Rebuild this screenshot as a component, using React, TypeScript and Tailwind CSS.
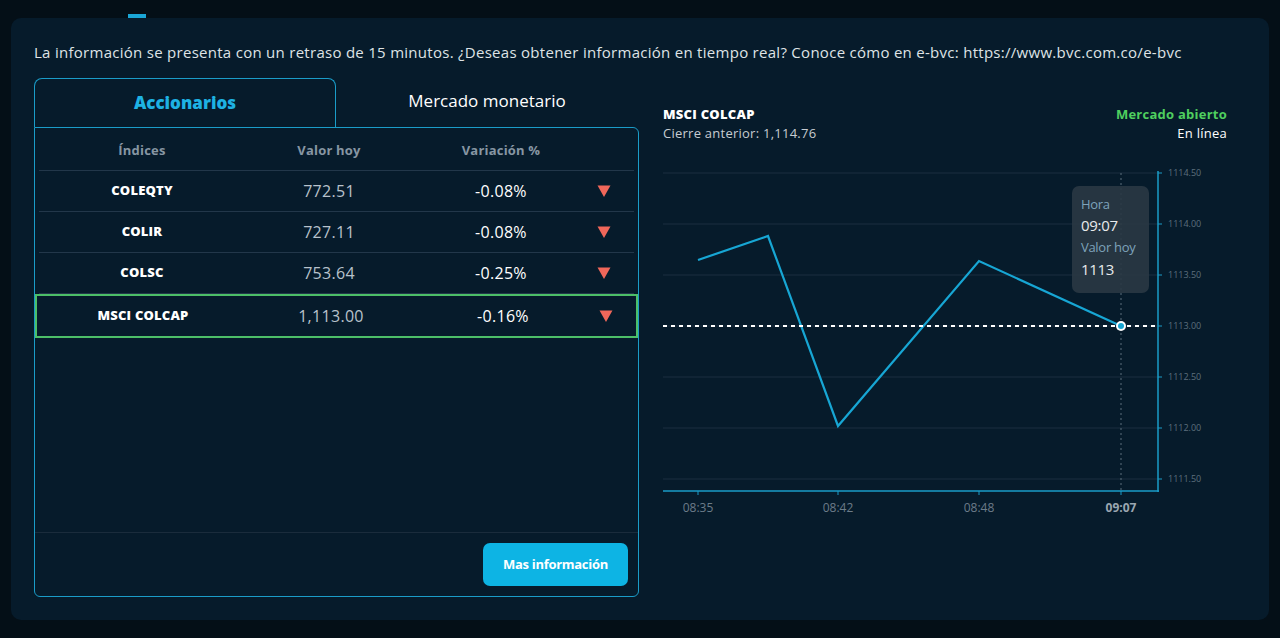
import React from "react";

const rows = [
  { name: "COLEQTY", value: "772.51", change: "-0.08%" },
  { name: "COLIR", value: "727.11", change: "-0.08%" },
  { name: "COLSC", value: "753.64", change: "-0.25%" },
];

// chart coords: svg top sits at page y=164
const yLabels = [
  { y: 8, t: "1114.50" },
  { y: 59, t: "1114.00" },
  { y: 110, t: "1113.50" },
  { y: 161, t: "1113.00" },
  { y: 212, t: "1112.50" },
  { y: 263, t: "1112.00" },
  { y: 314, t: "1111.50" },
];

const xLabels = [
  { x: 35, t: "08:35" },
  { x: 175, t: "08:42" },
  { x: 316, t: "08:48" },
  { x: 458, t: "09:07" },
];

function DownTriangle() {
  return (
    <svg viewBox="0 0 14 14" className="h-[14px] w-[14px]">
      <path d="M0.5 1.5h13L7 13z" fill="#f0675a" />
    </svg>
  );
}

function Row({
  name,
  value,
  change,
  selected,
}: {
  name: string;
  value: string;
  change: string;
  selected?: boolean;
}) {
  return (
    <div
      className={
        selected
          ? "grid h-[44px] grid-cols-[208px_168px_176px_44px] items-center border-2 border-[#4cbf68] px-[2px]"
          : "mx-[4px] grid h-[41px] grid-cols-[206px_168px_176px_44px] items-center border-b border-[#22374a]"
      }
    >
      <div className="text-center text-[13px] font-extrabold tracking-[0.2px] text-white">{name}</div>
      <div className="text-center text-[16px] tracking-[0.3px] text-[#b8c2cb]">{value}</div>
      <div className="text-center text-[16px] tracking-[0.3px] text-white">{change}</div>
      <div className="flex pl-[8px]">
        <DownTriangle />
      </div>
    </div>
  );
}

function Chart() {
  const pts = "35,95 105,71 175,261 316,96 458,161";
  return (
    <div className="relative mt-[22px] h-[358px] w-[564px]">
      <svg width="564" height="358" className="block">
        {yLabels.map((l) => (
          <g key={l.t}>
            <line x1="0" x2="495" y1={l.y} y2={l.y} stroke="#15293a" strokeWidth="1.5" />
            <line x1="495" x2="499" y1={l.y} y2={l.y} stroke="#1a9cc8" strokeWidth="1" />
            <text x="505" y={l.y + 3} fontSize="9" fill="#5d6f7d" fontFamily="'Open Sans', sans-serif">
              {l.t}
            </text>
          </g>
        ))}
        <line x1="458" x2="458" y1="8" y2="326" stroke="#5a6e7d" strokeWidth="1" strokeDasharray="2 3" />
        <line x1="495" x2="495" y1="6" y2="327" stroke="#1a9cc8" strokeWidth="1.5" />
        <line x1="0" x2="496" y1="326" y2="326" stroke="#1a9cc8" strokeWidth="1.5" />
        {xLabels.map((l) => (
          <g key={l.t}>
            <line x1={l.x} x2={l.x} y1="326" y2="330" stroke="#1a9cc8" strokeWidth="1" />
            <text
              x={l.x}
              y="347"
              fontSize="12"
              textAnchor="middle"
              fill={l.t === "09:07" ? "#9aa6b0" : "#6c7c89"}
              fontWeight={l.t === "09:07" ? 700 : 400}
              fontFamily="'Open Sans', sans-serif"
            >
              {l.t}
            </text>
          </g>
        ))}
        <polyline points={pts} fill="none" stroke="#17a6d4" strokeWidth="2.2" />
        <line x1="0" x2="495" y1="161" y2="161" stroke="#ffffff" strokeWidth="2" strokeDasharray="4 4" />
        <circle cx="458" cy="161" r="5" fill="#ffffff" />
        <circle cx="458" cy="161" r="3" fill="#17a6d4" />
      </svg>
      <div className="absolute left-[409px] top-[21px] flex h-[107px] w-[77px] flex-col rounded-[7px] bg-[#2a3844]/90 px-[9px] pt-[9px]">
        <span className="text-[13px] leading-[19px] tracking-[-0.3px] text-[#7ea3bb]">Hora</span>
        <span className="text-[15px] leading-[22px] tracking-[-0.3px] text-[#e8eaec]">09:07</span>
        <span className="text-[13px] leading-[22px] tracking-[-0.3px] text-[#7ea3bb]">Valor hoy</span>
        <span className="text-[15px] leading-[22px] tracking-[-0.3px] text-[#e8eaec]">1113</span>
      </div>
    </div>
  );
}

export default function App() {
  return (
    <div
      className="min-h-[638px] bg-[#040f17] px-[11px] pt-[14px]"
      style={{ fontFamily: "'Open Sans', 'Noto Sans', sans-serif" }}
    >
      <div className="ml-[117px] h-[4px] w-[18px] bg-[#1aa6d6]" />
      <div className="h-[602px] rounded-[10px] bg-[#061b2b] pl-[23px] pt-[24px]">
        <p className="whitespace-nowrap text-[15px] leading-[21px] tracking-[0.28px] text-[#dfe3e6]">
          La información se presenta con un retraso de 15 minutos. ¿Deseas obtener información en tiempo real? Conoce
          cómo en e-bvc: https://www.bvc.com.co/e-bvc
        </p>

        <div className="mt-[15px] flex gap-[24px]">
          {/* Left: tabs + table */}
          <div className="flex w-[605px] flex-col">
            <div className="flex h-[49px]">
              <div className="flex w-[302px] items-center justify-center rounded-t-[8px] border-x-[1.5px] border-t-[1.5px] border-[#1a9cc8] text-[17px] font-extrabold text-[#1eb2e3]">
                Accionarios
              </div>
              <div className="flex w-[302px] items-center justify-center pb-[4px] text-[17px] text-white">
                Mercado monetario
              </div>
            </div>
            <div className="flex h-[470px] flex-col rounded-b-[6px] rounded-tr-[6px] border-[1.5px] border-[#1a9cc8]">
              <div className="mx-[4px] grid h-[43px] grid-cols-[206px_168px_176px_44px] items-center border-b border-[#22374a] pt-[3px] text-[13px] font-bold tracking-[0.2px] text-[#8796a3]">
                <div className="text-center">Índices</div>
                <div className="text-center">Valor hoy</div>
                <div className="text-center">Variación %</div>
                <div />
              </div>
              {rows.map((r) => (
                <Row key={r.name} {...r} />
              ))}
              <Row name="MSCI COLCAP" value="1,113.00" change="-0.16%" selected />
              <div className="flex-1" />
              <div className="flex justify-end border-t border-[#1a2c3c] py-[10px] pr-[10px]">
                <button className="h-[43px] w-[145px] rounded-[7px] bg-[#0db4e4] text-[13px] font-bold tracking-[-0.3px] text-white">
                  Mas información
                </button>
              </div>
            </div>
          </div>

          {/* Right: chart */}
          <div className="flex w-[564px] flex-col pt-[27px]">
            <div className="flex justify-between text-[13px] leading-[19px] tracking-[0.25px]">
              <div>
                <div className="font-extrabold text-white">MSCI COLCAP</div>
                <div className="text-[#c6ccd1]">Cierre anterior: 1,114.76</div>
              </div>
              <div className="text-right">
                <div className="font-bold text-[#4fcf5f]">Mercado abierto</div>
                <div className="text-white">En línea</div>
              </div>
            </div>
            <Chart />
          </div>
        </div>
      </div>
    </div>
  );
}
